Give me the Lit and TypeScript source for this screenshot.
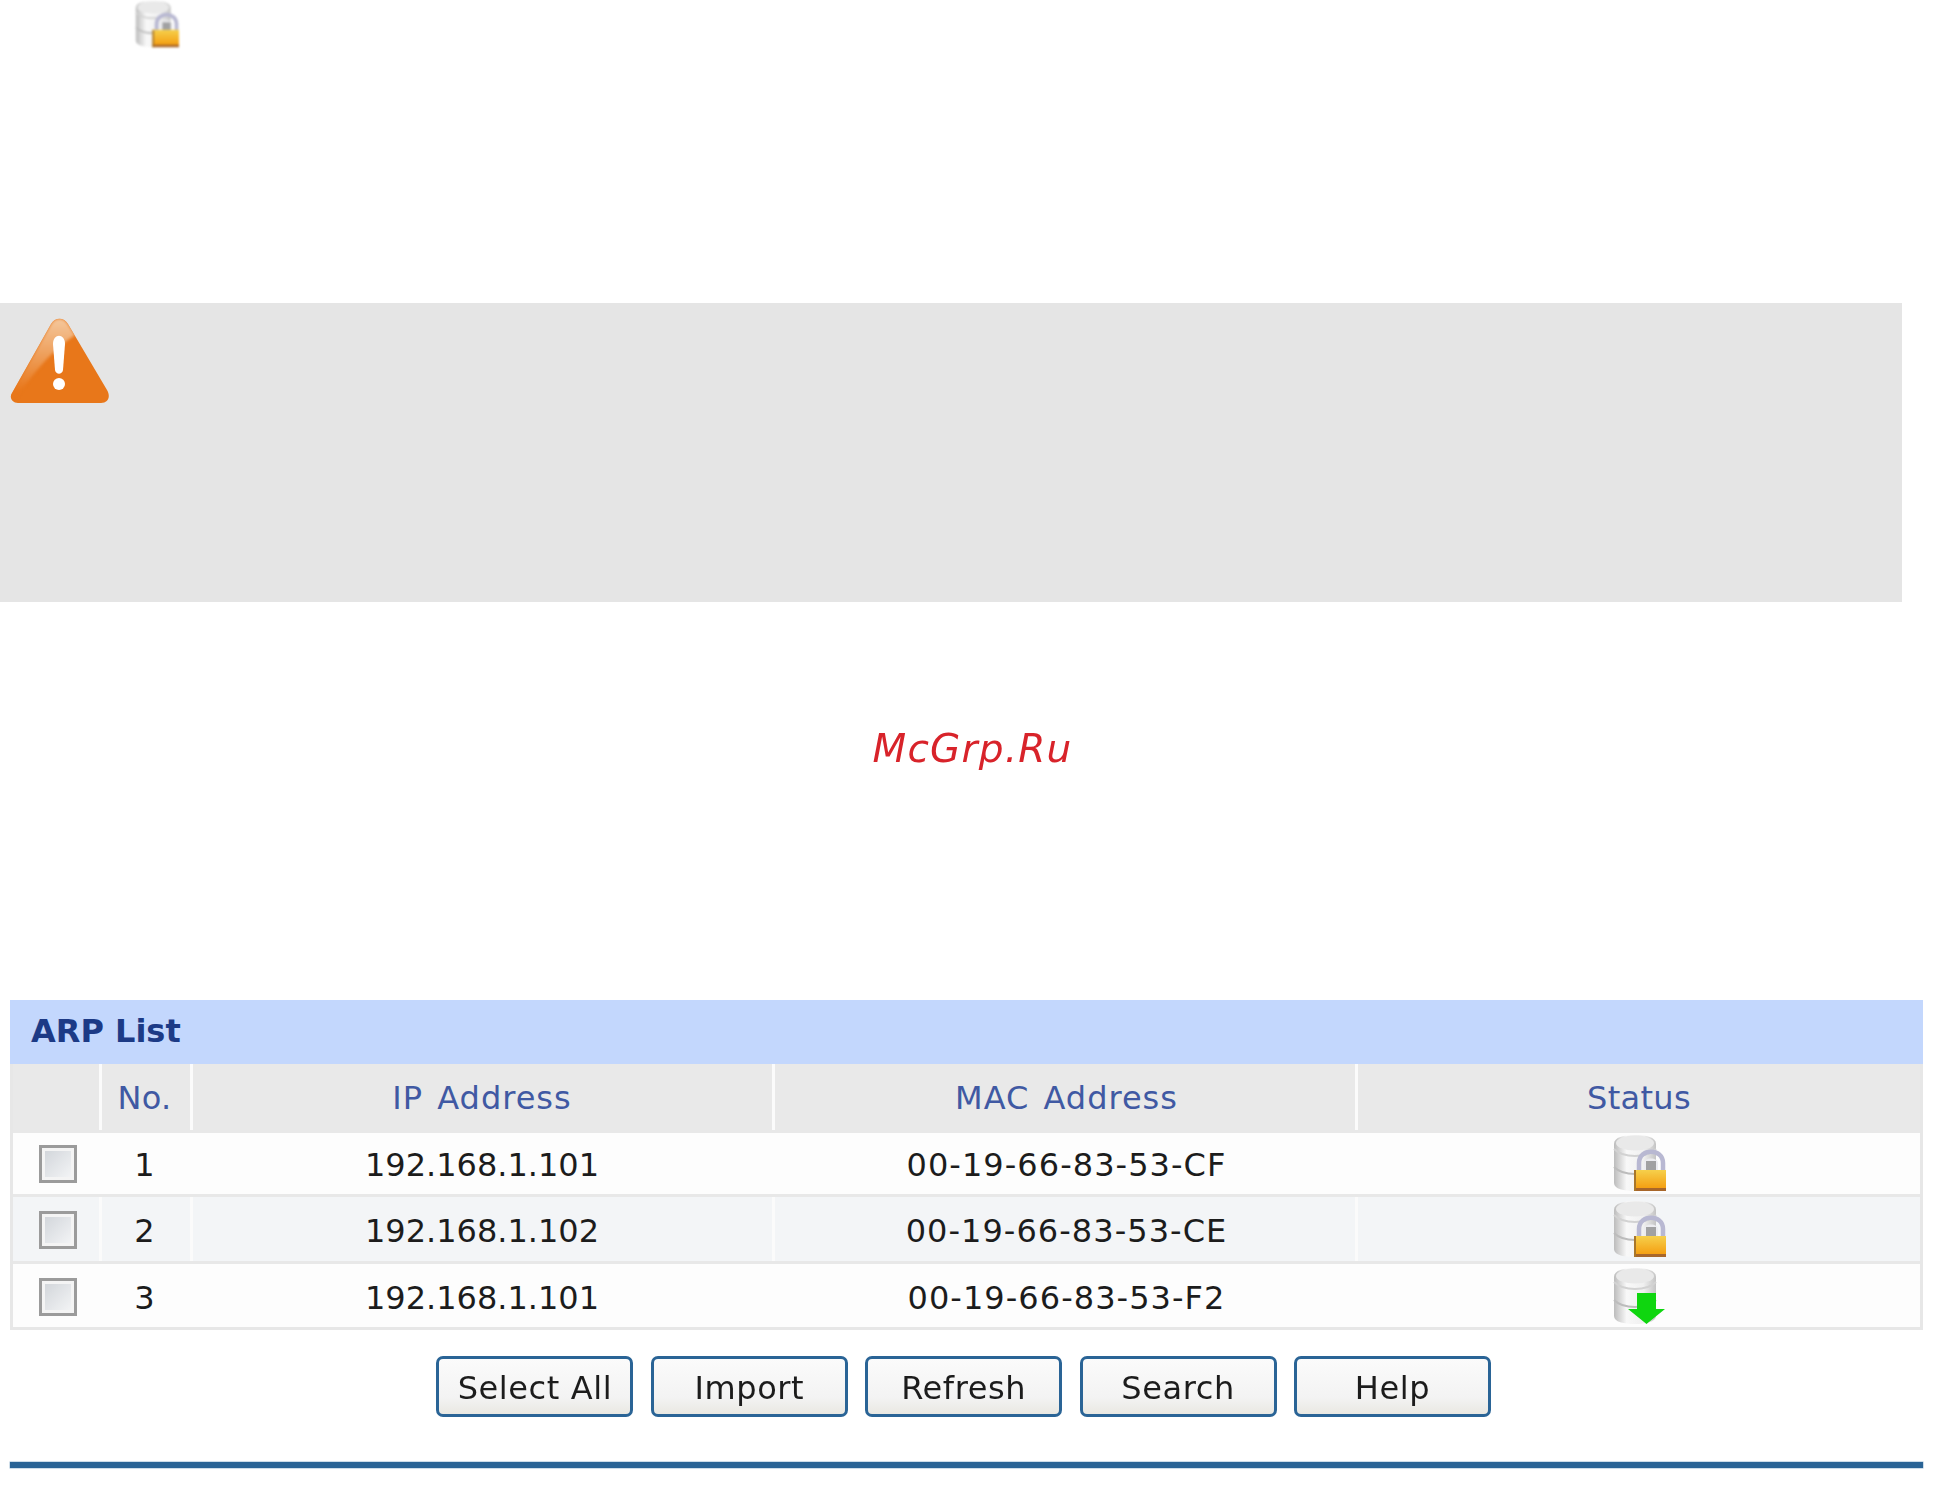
import { LitElement, html, css, svg } from "lit";
import { customElement } from "lit/decorators.js";

const cylinder = svg`
  <path d="M1 9 C1 2 11 0 22 0 C33 0 43 2 43 9 V48 C43 54 32 56 22 56 C11 56 1 54 1 48 Z" fill="url(#db)"/>
  <ellipse cx="22" cy="8" rx="19" ry="7.5" fill="#e9e9e9"/>
  <path d="M1 32 C7 38 15 39 22 39 C31 39 38 37 43 32" fill="none" stroke="#bcbcbc" stroke-width="2"/>
  <path d="M1 14 C7 20 15 21 22 21 C31 21 38 19 43 14" fill="none" stroke="#d2d2d2" stroke-width="2"/>`;

const defs = (id: string) => svg`
  <defs>
    <linearGradient id="db" x1="0" x2="1" y1="0" y2="0">
      <stop offset="0" stop-color="#bcbcbc"/><stop offset=".3" stop-color="#f8f8f8"/>
      <stop offset=".7" stop-color="#f0f0f0"/><stop offset="1" stop-color="#c4c4c4"/>
    </linearGradient>
    <linearGradient id="${id}" x1="0" x2="0" y1="0" y2="1">
      <stop offset="0" stop-color="#f6d04c"/><stop offset="1" stop-color="#f49a0c"/>
    </linearGradient>
  </defs>`;

const lockIcon = (id: string) => html`<svg class="db" viewBox="0 0 53 56" aria-hidden="true">
  ${defs(id)}${cylinder}
  <path d="M26 36 V28 C26 13 50 13 50 28 V36" fill="none" stroke="#b8b8d2" stroke-width="4.5"/>
  <path d="M31 36 V28 C31 22 45 22 45 28 V36" fill="#ececf0"/>
  <rect x="33" y="26" width="10" height="10" fill="#8e8e8e" opacity=".8"/>
  <rect x="21" y="35" width="32" height="20" fill="url(#${id})"/>
  <rect x="21" y="53" width="32" height="3" fill="#a8662a"/>
  <rect x="21" y="35" width="2" height="21" fill="#a8762a"/>
</svg>`;

const arrowIcon = html`<svg class="db" viewBox="0 0 53 56" aria-hidden="true">
  ${defs("g3")}${cylinder}
  <path d="M24 25 H43 V41 H52 L33.5 56 L15 41 H24 Z" fill="#0fd60f"/>
</svg>`;

const rows = [
  { no: "1", ip: "192.168.1.101", mac: "00-19-66-83-53-CF", icon: lockIcon("g1") },
  { no: "2", ip: "192.168.1.102", mac: "00-19-66-83-53-CE", icon: lockIcon("g2") },
  { no: "3", ip: "192.168.1.101", mac: "00-19-66-83-53-F2", icon: arrowIcon },
];

const buttons = ["Select All", "Import", "Refresh", "Search", "Help"];

@customElement("app-root")
export class AppRoot extends LitElement {
  static styles = css`
    :host {
      display: block;
      width: 1933px;
      height: 1494px;
      overflow: hidden;
      background: #fff;
      font-family: "DejaVu Sans", Verdana, sans-serif;
      font-size: 32px;
      color: #1c1c1c;
    }
    .top { height: 303px; padding-left: 135px; box-sizing: border-box; }
    .top .db { width: 44px; height: 48px; display: block; filter: blur(0.8px); }
    .note {
      width: 1902px;
      height: 299px;
      box-sizing: border-box;
      background: #e5e5e5;
      padding: 15px 0 0 10px;
    }
    .note svg { display: block; width: 100px; height: 86px; }
    .soft { filter: blur(1.5px); }
    .mark {
      height: 398px;
      box-sizing: border-box;
      padding: 121px 0 0 12px;
      text-align: center;
      font-style: oblique;
      font-size: 39px;
      letter-spacing: 1.2px;
      line-height: 52px;
      color: #d8232a;
      filter: blur(0.3px);
    }
    .panel { margin: 0 10px; filter: blur(0.7px); }
    .title {
      height: 64px;
      background: #c3d7fd;
      display: flex;
      align-items: center;
      padding: 0 0 3px 21px;
      box-sizing: border-box;
      font-weight: bold;
      color: #1c3a86;
    }
    .table { border: solid #e7e7e7; border-width: 0 3px 3px; }
    .row {
      display: grid;
      grid-template-columns: 89px 91px 582px 583px 1fr;
      height: 64px;
      box-sizing: border-box;
      border-top: 3px solid #e8e8e8;
      background: #fdfdfd;
    }
    .row .cell { padding-top: 2px; }
    .row.alt { background: #f3f5f7; height: 67px; }
    .row.alt .cell { padding-top: 4px; }
    .row.last { height: 66px; }
    .row.last .cell { padding-top: 5px; }
    .row.head {
      height: 66px;
      border-top: 0;
      background: #e9e9e9;
      color: #4059a3;
      letter-spacing: 0.3px;
    }
    .row.head .cell { padding-top: 1px; }
    .row.head .wide { letter-spacing: 1px; word-spacing: 3px; }
    .cell {
      display: flex;
      align-items: center;
      justify-content: center;
      box-sizing: border-box;
      border-left: 3px solid transparent;
      margin-left: -3px;
      padding-right: 4px;
    }
    .cell:first-child { border-left: 0; margin-left: 0; padding-right: 0; }
    .cell.no { padding-right: 6px; }
    .cell.mac { letter-spacing: 1.05px; padding-right: 0; }
    .cell.state { padding-right: 0; }
    .head .cell, .alt .cell { border-left-color: #fbfbfb; }
    .head .cell:first-child, .alt .cell:first-child { border-left: 0; }
    .row .db { width: 53px; height: 56px; display: block; margin-top: -4px; }
    .check {
      width: 38px;
      height: 38px;
      box-sizing: border-box;
      border: 3px solid #9b9b9b;
      box-shadow: inset 0 0 0 3px #f4f4f4;
      background: linear-gradient(135deg, #cfd3d8, #f6f7f8);
      margin-left: 1px;
      margin-bottom: 2px;
    }
    .actions {
      display: flex;
      justify-content: center;
      gap: 17.4px;
      padding: 26px 0 0;
      height: 132px;
      box-sizing: border-box;
      margin-right: 5.6px;
    }
    .btn {
      width: 197px;
      height: 61px;
      box-sizing: border-box;
      border: 3px solid #2a6496;
      border-radius: 7px;
      background: linear-gradient(#fbfbfb, #f3f3f3 70%, #e9e8e2);
      font: inherit;
      letter-spacing: 0.6px;
      color: #1c1c1c;
      padding: 2px 0 0;
    }
    .rule { height: 6px; background: #2a6496; box-shadow: 0 0 0 0.5px #9dbbd3; }
  `;

  render() {
    return html`
      <div class="top">${lockIcon("g0")}</div>
      <div class="note">
        <svg viewBox="0 0 100 86" aria-hidden="true">
          <defs>
            <linearGradient id="gl" x1="0" y1="0" x2="0" y2="0.9">
              <stop offset="0" stop-color="#f4c79c"/><stop offset="1" stop-color="#e8771a"/>
            </linearGradient>
            <clipPath id="tri">
              <path d="M41 6 C45 -1 54 -1 58 6 L97 72 C101 79 98 85 91 85 H8 C2 85 -1 79 2 75 Z"/>
            </clipPath>
          </defs>
          <path d="M41 6 C45 -1 54 -1 58 6 L97 72 C101 79 98 85 91 85 H8 C2 85 -1 79 2 75 Z" fill="#e8771a"/>
          <g clip-path="url(#tri)">
            <path class="soft" d="M41 6 C45 -1 54 -1 58 6 L65 17 C45 30 25 52 7 79 C3 83 0 79 2 75 Z" fill="url(#gl)"/>
          </g>
          <path d="M43 26 C43 15 55 15 55 26 L53 52 C52 57 46 57 45 52 Z" fill="#fff"/>
          <circle cx="49" cy="66" r="6" fill="#fff"/>
        </svg>
      </div>
      <div class="mark">McGrp.Ru</div>
      <div class="panel">
        <div class="title">ARP List</div>
        <div class="table">
          <div class="row head">
            <div class="cell"></div>
            <div class="cell no">No.</div>
            <div class="cell wide">IP Address</div>
            <div class="cell wide mac">MAC Address</div>
            <div class="cell state">Status</div>
          </div>
          ${rows.map(
            (r, i) => html`<div class="row ${i === 1 ? "alt" : ""} ${i === 2 ? "last" : ""}">
              <div class="cell"><span class="check"></span></div>
              <div class="cell no">${r.no}</div>
              <div class="cell">${r.ip}</div>
              <div class="cell mac">${r.mac}</div>
              <div class="cell state">${r.icon}</div>
            </div>`
          )}
        </div>
        <div class="actions">
          ${buttons.map((b) => html`<button class="btn">${b}</button>`)}
        </div>
        <div class="rule"></div>
      </div>
    `;
  }
}
